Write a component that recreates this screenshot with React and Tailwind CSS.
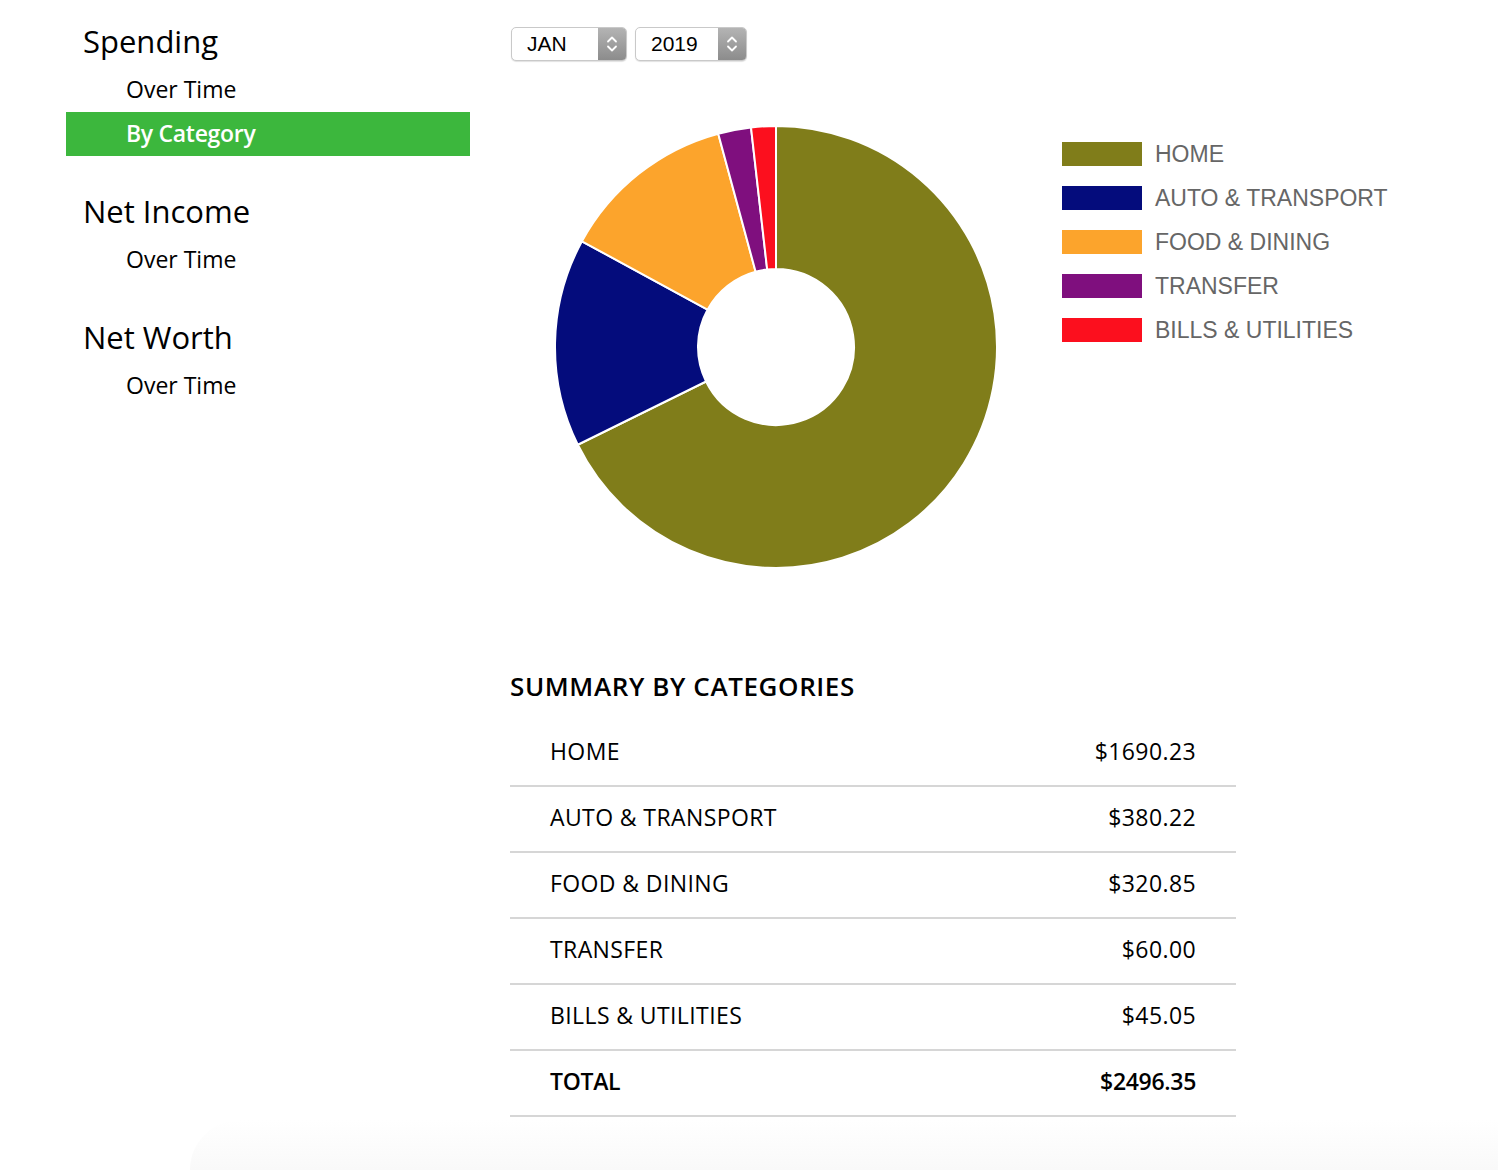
import React from 'react';

const categories = [
  { name: 'HOME', amount: 1690.23, color: '#807d1a' },
  { name: 'AUTO & TRANSPORT', amount: 380.22, color: '#040c7c' },
  { name: 'FOOD & DINING', amount: 320.85, color: '#fca42c' },
  { name: 'TRANSFER', amount: 60.0, color: '#7f0f7e' },
  { name: 'BILLS & UTILITIES', amount: 45.05, color: '#fc0f1e' },
];

const total = categories.reduce((s, c) => s + c.amount, 0);

const ui = { fontFamily: '"Open Sans", "Noto Sans", sans-serif' };
const helv = { fontFamily: '"Liberation Sans", Arial, sans-serif' };

function arcPath(cx, cy, r, r0, a0, a1) {
  const p = (rad, a) => [cx + rad * Math.sin(a), cy - rad * Math.cos(a)];
  const large = a1 - a0 > Math.PI ? 1 : 0;
  const [x0, y0] = p(r, a0);
  const [x1, y1] = p(r, a1);
  const [x2, y2] = p(r0, a1);
  const [x3, y3] = p(r0, a0);
  return `M${x0} ${y0} A${r} ${r} 0 ${large} 1 ${x1} ${y1} L${x2} ${y2} A${r0} ${r0} 0 ${large} 0 ${x3} ${y3} Z`;
}

function Donut() {
  let a = 0;
  return (
    <svg width="450" height="450" viewBox="0 0 450 450" className="shrink-0">
      {categories.map((c) => {
        const a0 = a;
        a += (c.amount / total) * Math.PI * 2;
        return (
          <path
            key={c.name}
            d={arcPath(225, 225, 221, 78, a0, a)}
            fill={c.color}
            stroke="#fff"
            strokeWidth="2"
            strokeLinejoin="round"
          />
        );
      })}
    </svg>
  );
}

function Select({ value, width }) {
  return (
    <div
      className={`flex h-[34px] items-stretch rounded-[5px] border border-[#c9c9c9] bg-white shadow-[0_1px_1px_rgba(0,0,0,0.12)] overflow-hidden ${width}`}
    >
      <span className="flex-1 flex items-center pl-[15px] text-[21px] text-black" style={helv}>{value}</span>
      <span className="w-[28px] flex items-center justify-center bg-gradient-to-b from-[#b4b4b4] to-[#8c8c8c]">
        <svg width="12" height="20" viewBox="0 0 12 20" fill="none" stroke="#fff" strokeWidth="1.8" strokeLinecap="round" strokeLinejoin="round">
          <path d="M2 7.5 6 3.5 10 7.5" />
          <path d="M2 12.5 6 16.5 10 12.5" />
        </svg>
      </span>
    </div>
  );
}

function Section({ title, items, first }) {
  return (
    <div className={first ? '' : 'mt-[32px]'}>
      <div className="h-[50px] flex items-center pl-[17px] pb-[3px] text-[31px] text-black">{title}</div>
      {items.map((it) => (
        <div
          key={it.label}
          className={`h-[44px] flex items-center pl-[60px] pb-[2px] text-[23px] ${it.active ? 'bg-[#3cb73d] text-white font-semibold tracking-[-0.3px]' : 'text-black'}`}
        >
          {it.label}
        </div>
      ))}
    </div>
  );
}

export default function App() {
  return (
    <div className="min-h-[1170px] bg-white flex flex-col" style={ui}>
      <div className="flex flex-1">
        <aside className="w-[470px] shrink-0 pl-[66px] pt-[18px]">
          <Section first title="Spending" items={[{ label: 'Over Time' }, { label: 'By Category', active: true }]} />
          <Section title="Net Income" items={[{ label: 'Over Time' }]} />
          <Section title="Net Worth" items={[{ label: 'Over Time' }]} />
        </aside>

        <main className="ml-[40px] pt-[27px] w-[726px] shrink-0">
          <div className="flex gap-[8px] pl-[1px]">
            <Select value="JAN" width="w-[116px]" />
            <Select value="2019" width="w-[112px]" />
          </div>

          <div className="flex mt-[61px] ml-[41px] w-[960px]">
            <Donut />
            <ul className="ml-[61px] mt-[20px] flex flex-col gap-[20px]" style={helv}>
              {categories.map((c) => (
                <li key={c.name} className="flex items-center h-[24px]">
                  <span className="w-[80px] h-[24px] shrink-0" style={{ backgroundColor: c.color }} />
                  <span className="ml-[13px] text-[23px] text-[#666666] whitespace-nowrap">{c.name}</span>
                </li>
              ))}
            </ul>
          </div>

          <h2 className="mt-[99px] h-[32px] flex items-center pb-[2px] text-[26px] font-semibold text-black tracking-[0.6px]">
            SUMMARY BY CATEGORIES
          </h2>

          <div className="mt-[18px]">
            {categories.map((c) => (
              <div key={c.name} className="h-[66px] flex items-center justify-between px-[40px] pb-[4px] border-b-2 border-[#d6d6d6] text-[23px] tracking-[0.4px] text-black">
                <span>{c.name}</span>
                <span>${c.amount.toFixed(2)}</span>
              </div>
            ))}
            <div className="h-[66px] flex items-center justify-between px-[40px] pb-[4px] border-b-2 border-[#d6d6d6] text-[23px] font-semibold tracking-[-0.3px] text-black">
              <span>TOTAL</span>
              <span>${total.toFixed(2)}</span>
            </div>
          </div>
        </main>
      </div>
      <div className="h-[50px] ml-[190px] rounded-tl-[140px] bg-gradient-to-b from-white to-[#f9f9f9]" />
    </div>
  );
}
